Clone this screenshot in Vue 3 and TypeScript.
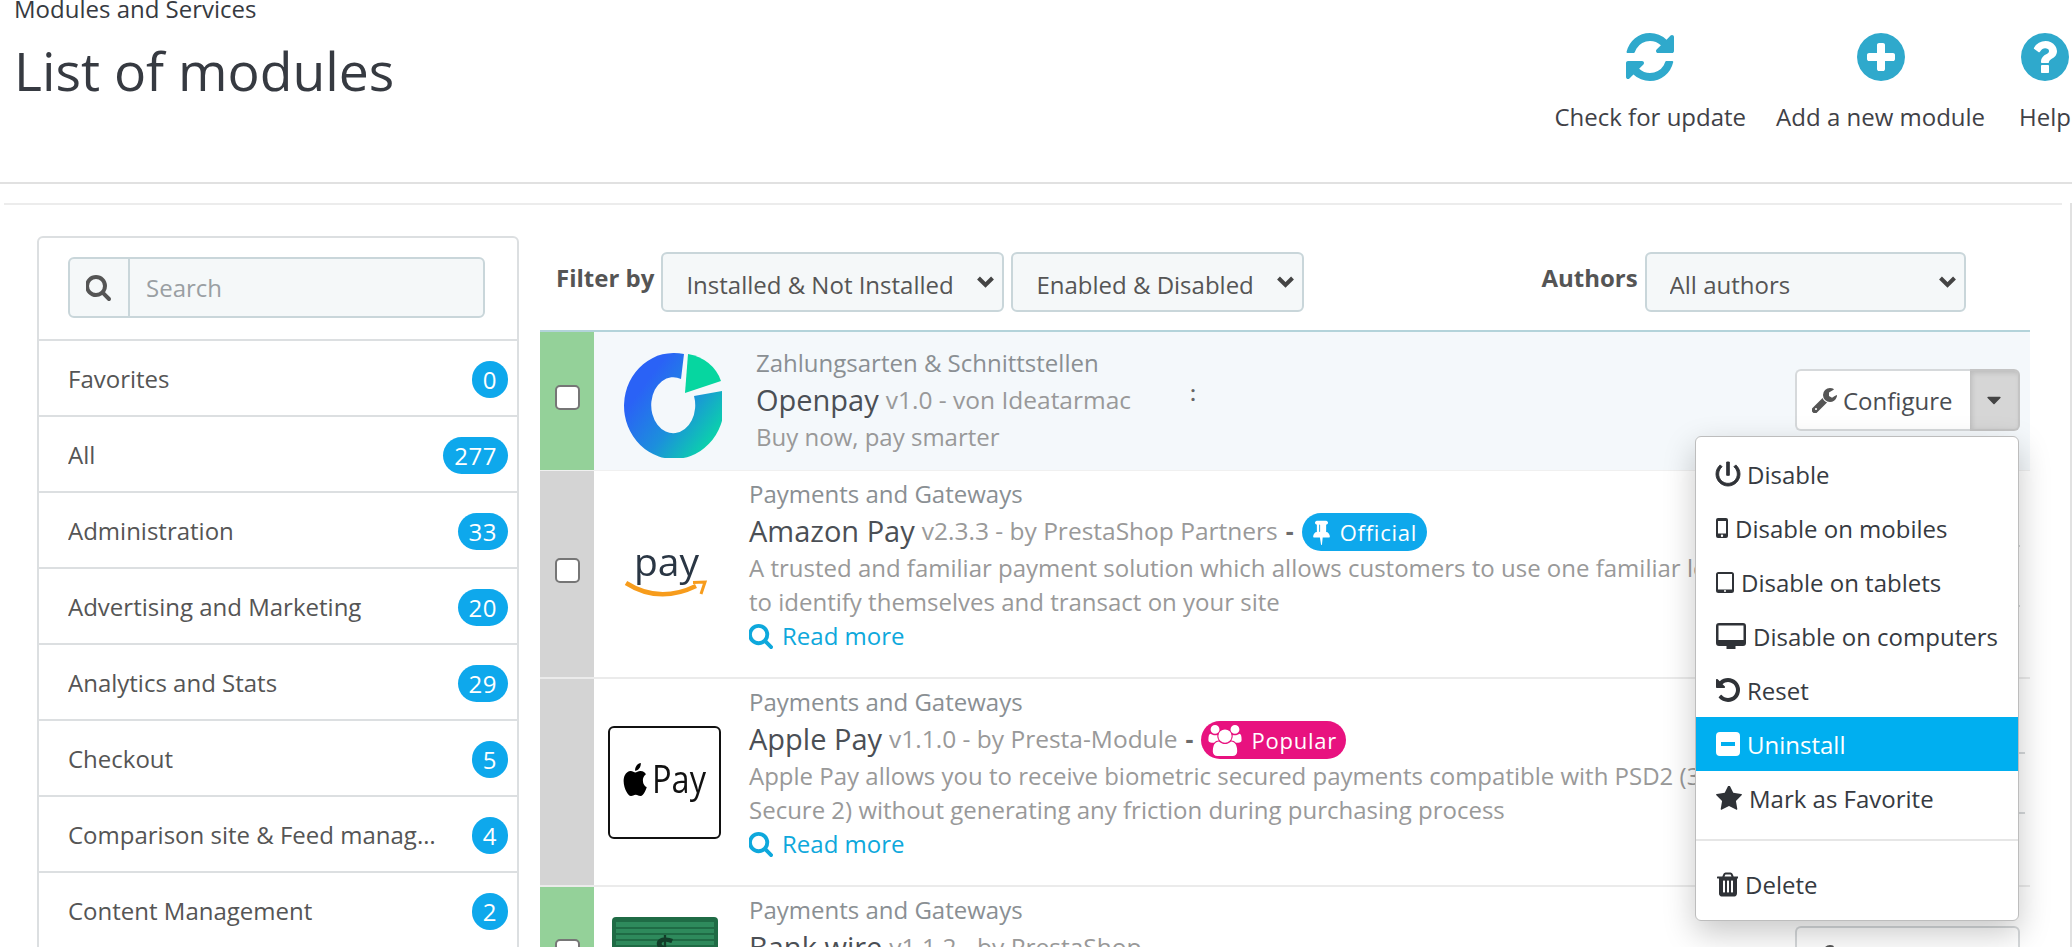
<script setup lang="ts">
interface Category { name: string; count: number }
interface MenuItem { label: string; vb: string; w: number; h: number; d: string; active?: boolean; evenodd?: boolean; sep?: boolean; heavy?: boolean }

const categories: Category[] = [
  { name: 'Favorites', count: 0 },
  { name: 'All', count: 277 },
  { name: 'Administration', count: 33 },
  { name: 'Advertising and Marketing', count: 20 },
  { name: 'Analytics and Stats', count: 29 },
  { name: 'Checkout', count: 5 },
  { name: 'Comparison site & Feed management', count: 4 },
  { name: 'Content Management', count: 2 },
]

const wrench = 'M448 1472q0-26-19-45t-45-19-45 19-19 45 19 45 45 19 45-19 19-45zm644-420l-682 682q-37 37-90 37-52 0-91-37l-106-108q-38-36-38-90 0-53 38-91l681-681q39 98 114.5 173.5t173.5 114.5zm634-435q0 39-23 106-47 134-164.5 217.5t-258.5 83.5q-185 0-316.5-131.5t-131.5-316.5 131.5-316.5 316.5-131.5q58 0 121.5 16.5t107.5 46.5q16 11 16 28t-16 28l-293 169v224l193 107q5-3 79-48.5t135.5-81 70.5-35.5q15 0 23.5 10t8.5 25z'
const caret = 'M1408 704q0 26-19 45l-448 448q-19 19-45 19t-45-19l-448-448q-19-19-19-45t19-45 45-19h896q26 0 45 19t19 45z'
const search = 'M1216 832q0-185-131.5-316.5t-316.5-131.5-316.5 131.5-131.5 316.5 131.5 316.5 316.5 131.5 316.5-131.5 131.5-316.5zm512 832q0 52-38 90t-90 38q-54 0-90-38l-343-342q-179 124-399 124-143 0-273.5-55.5t-225-150-150-225-55.5-273.5 55.5-273.5 150-225 225-150 273.5-55.5 273.5 55.5 225 150 150 225 55.5 273.5q0 220-124 399l343 343q37 37 37 90z'

const menu: MenuItem[] = [
  { label: 'Disable', vb: '3 3 18 18', w: 24, h: 24, heavy: true, d: 'M13 3h-2v10h2V3zm4.83 2.17l-1.42 1.42C17.99 7.86 19 9.81 19 12c0 3.87-3.13 7-7 7s-7-3.13-7-7c0-2.19 1.01-4.14 2.58-5.42L6.17 5.17C4.23 6.82 3 9.26 3 12c0 4.97 4.03 9 9 9s9-4.03 9-9c0-2.74-1.23-5.18-3.17-6.83z' },
  { label: 'Disable on mobiles', vb: '0 0 12 20', w: 12, h: 20, evenodd: true, d: 'M2 0h8a2 2 0 0 1 2 2v16a2 2 0 0 1-2 2H2a2 2 0 0 1-2-2V2a2 2 0 0 1 2-2zm0 3v12.5h8V3zM6 16.5a1.2 1.2 0 1 0 0 2.4 1.2 1.2 0 0 0 0-2.4z' },
  { label: 'Disable on tablets', vb: '0 0 18 21', w: 18, h: 21, evenodd: true, d: 'M2.5 0h13A2.5 2.5 0 0 1 18 2.5v16a2.5 2.5 0 0 1-2.5 2.5h-13A2.5 2.5 0 0 1 0 18.5v-16A2.5 2.5 0 0 1 2.5 0zM2 2v15.5h14V2zM9 18a1 1 0 1 0 0 2 1 1 0 0 0 0-2z' },
  { label: 'Disable on computers', vb: '0 0 30 26', w: 30, h: 26, evenodd: true, d: 'M3 0h24a3 3 0 0 1 3 3v17a3 3 0 0 1-3 3h-7.5v3h-9v-3H3a3 3 0 0 1-3-3V3a3 3 0 0 1 3-3zm-.5 2.5v14.5h25V2.5z' },
  { label: 'Reset', vb: '128 128 1536 1536', w: 24, h: 24, d: 'M1664 896q0 156-61 298t-164 245-245 164-298 61q-172 0-327-72.5t-264-204.5q-7-10-6.5-22.5t8.5-20.5l137-138q10-9 25-9 16 2 23 12 73 95 179 147t225 52q104 0 198.5-40.5t163.5-109.5 109.5-163.5 40.5-198.5-40.5-198.5-109.5-163.5-163.5-109.5-198.5-40.5q-98 0-188 35.5t-160 101.5l137 138q31 30 14 69-17 40-59 40h-448q-26 0-45-19t-19-45v-448q0-42 40-59 39-17 69 14l130 129q107-101 244.5-156.5t284.5-55.5q156 0 298 61t245 164 164 245 61 298z' },
  { label: 'Uninstall', vb: '0 0 24 24', w: 24, h: 24, active: true, evenodd: true, d: 'M4 0h16a4 4 0 0 1 4 4v16a4 4 0 0 1-4 4H4a4 4 0 0 1-4-4V4a4 4 0 0 1 4-4zm1 10v4h14v-4z' },
  { label: 'Mark as Favorite', vb: '0 128 1664 1536', w: 26, h: 25, d: 'M1664 647q0 22-26 48l-363 354 86 500q1 7 1 20 0 21-10.5 35.5t-30.5 14.5q-19 0-40-12l-449-236-449 236q-22 12-40 12-21 0-31.5-14.5t-10.5-35.5q0-6 2-20l86-500-364-354q-25-27-25-48 0-37 56-46l502-73 225-455q19-41 49-41t49 41l225 455 502 73q56 9 56 46z' },
  { label: 'Delete', vb: '128 128 1408 1536', w: 22, h: 25, sep: true, d: 'M704 1376v-704q0-14-9-23t-23-9h-64q-14 0-23 9t-9 23v704q0 14 9 23t23 9h64q14 0 23-9t9-23zm256 0v-704q0-14-9-23t-23-9h-64q-14 0-23 9t-9 23v704q0 14 9 23t23 9h64q14 0 23-9t9-23zm256 0v-704q0-14-9-23t-23-9h-64q-14 0-23 9t-9 23v704q0 14 9 23t23 9h64q14 0 23-9t9-23zm-544-992h448l-48-117q-7-9-17-11h-317q-10 2-17 11zm928 32v64q0 14-9 23t-23 9h-96v948q0 83-47 143.5t-113 60.5h-832q-66 0-113-58.5t-47-141.5v-952h-96q-14 0-23-9t-9-23v-64q0-14 9-23t23-9h309l70-167q15-37 54-63t79-26h320q40 0 79 26t54 63l70 167h309q14 0 23 9t9 23z' },
]
</script>

<template>
  <div class="page">
    <header class="head">
      <div class="titles">
        <div class="crumb">Modules and Services</div>
        <h1 class="title">List of modules</h1>
      </div>
      <nav class="toolbar">
        <a class="tool tool-update">
          <svg width="48" height="48" viewBox="128 128 1536 1536"><path d="M1639 1056q0 5-1 7-64 268-268 434.5t-478 166.5q-146 0-282.5-55t-243.5-157l-129 129q-19 19-45 19t-45-19-19-45v-448q0-26 19-45t45-19h448q26 0 45 19t19 45-19 45l-137 137q71 66 161 102t187 36q134 0 250-65t186-179q11-17 53-117 8-23 30-23h192q13 0 22.5 9.5t9.5 22.5zm25-800v448q0 26-19 45t-45 19h-448q-26 0-45-19t-19-45 19-45l138-138q-148-137-349-137-134 0-250 65t-186 179q-11 17-53 117-8 23-30 23h-199q-13 0-22.5-9.5t-9.5-22.5v-7q65-268 270-434.5t480-166.5q146 0 284 55.5t245 156.5l130-129q19-19 45-19t45 19 19 45z" /></svg>
          <span>Check for update</span>
        </a>
        <a class="tool tool-add">
          <svg width="48" height="48" viewBox="128 128 1536 1536"><path d="M1344 960v-128q0-26-19-45t-45-19h-256v-256q0-26-19-45t-45-19h-128q-26 0-45 19t-19 45v256h-256q-26 0-45 19t-19 45v128q0 26 19 45t45 19h256v256q0 26 19 45t45 19h128q26 0 45-19t19-45v-256h256q26 0 45-19t19-45zm320-64q0 209-103 385.5t-279.5 279.5-385.5 103-385.5-103-279.5-279.5-103-385.5 103-385.5 279.5-279.5 385.5-103 385.5 103 279.5 279.5 103 385.5z" /></svg>
          <span>Add a new module</span>
        </a>
        <a class="tool tool-help">
          <svg width="48" height="48" viewBox="128 128 1536 1536"><path d="M1024 1376v-192q0-14-9-23t-23-9h-192q-14 0-23 9t-9 23v192q0 14 9 23t23 9h192q14 0 23-9t9-23zm256-672q0-88-55.5-163t-138.5-116-170-41q-243 0-371 213-15 24 8 42l132 100q7 6 19 6 16 0 25-12 53-68 86-92 34-24 86-24 48 0 85.5 26t37.5 59q0 38-20 61t-68 45q-63 28-115.5 86.5t-52.5 125.5v36q0 14 9 23t23 9h192q14 0 23-9t9-23q0-19 21.5-49.5t54.5-49.5q32-18 49-28.5t46-35 44.5-48 28-60.5 12.5-81zm384 192q0 209-103 385.5t-279.5 279.5-385.5 103-385.5-103-279.5-279.5-103-385.5 103-385.5 279.5-279.5 385.5-103 385.5 103 279.5 279.5 103 385.5z" /></svg>
          <span>Help</span>
        </a>
      </nav>
    </header>

    <div class="content">
      <div class="rule" />
      <div class="layout">
        <aside class="side">
          <div class="side-search">
            <div class="search-group">
              <span class="search-addon">
                <svg width="26" height="26" viewBox="128 128 1664 1664"><path :d="search" /></svg>
              </span>
              <input class="search-input" placeholder="Search" />
            </div>
          </div>
          <div v-for="c in categories" :key="c.name" class="cat">
            <span class="cat-name">{{ c.name }}</span>
            <span class="cat-count">{{ c.count }}</span>
          </div>
        </aside>

        <main class="main">
          <div class="filters">
            <label class="filter-label">Filter by</label>
            <select class="sel sel-install"><option>Installed &amp; Not Installed</option></select>
            <select class="sel sel-enable"><option>Enabled &amp; Disabled</option></select>
            <label class="filter-label authors">Authors</label>
            <select class="sel sel-author"><option>All authors</option></select>
          </div>

          <div class="table">
            <!-- Openpay -->
            <div class="row row-open">
              <div class="status on"><input type="checkbox" class="check" /></div>
              <div class="logo logo-open">
                <svg class="open-mark" width="100" height="106" viewBox="0 0 100 106">
                  <defs>
                    <linearGradient id="openGrad" x1="0.2" y1="0.3" x2="0.9" y2="0.85">
                      <stop offset="0" stop-color="#2a62f6" />
                      <stop offset="0.5" stop-color="#1c8fdc" />
                      <stop offset="1" stop-color="#0ad6a8" />
                    </linearGradient>
                  </defs>
                  <path d="M62 2A50 53 0 1 0 100 39L72 44A22 28 0 1 1 59 27Z" fill="url(#openGrad)" />
                  <path d="M66 2A42 40 0 0 1 99 29L63 41Z" fill="#06d6a0" />
                </svg>
              </div>
              <div class="info info-open">
                <div class="cat-line">Zahlungsarten &amp; Schnittstellen</div>
                <div class="name-line"><span class="name">Openpay</span> <span class="ver">v1.0 - von Ideatarmac</span></div>
                <div class="desc">Buy now, pay smarter</div>
              </div>
              <span class="note">:</span>
              <div class="actions act-open">
                <div class="btn-group">
                  <button class="btn-main">
                    <svg width="25" height="25" viewBox="128 128 1600 1600"><path :d="wrench" /></svg>
                    Configure
                  </button>
                  <button class="btn-caret open">
                    <svg width="20" height="20" viewBox="128 128 1536 1536"><path :d="caret" /></svg>
                  </button>
                </div>
                <ul class="menu">
                  <template v-for="m in menu" :key="m.label">
                    <li v-if="m.sep" class="menu-sep" />
                    <li class="menu-item" :class="{ active: m.active, heavy: m.heavy }">
                      <svg :width="m.w" :height="m.h" :viewBox="m.vb"><path :d="m.d" :fill-rule="m.evenodd ? 'evenodd' : undefined" /></svg>
                      <span>{{ m.label }}</span>
                    </li>
                  </template>
                </ul>
              </div>
            </div>

            <!-- Amazon Pay -->
            <div class="row">
              <div class="status off"><input type="checkbox" class="check" /></div>
              <div class="logo">
                <svg class="soft" width="120" height="60" viewBox="0 0 120 60">
                  <text x="29" y="32" class="pay-word">pay</text>
                  <path d="M21 39Q54 60 91 42" fill="none" stroke="#f79c1c" stroke-width="4.500" />
                  <path d="M88 38.500L100 38L96 50" fill="none" stroke="#f79c1c" stroke-width="3" />
                </svg>
              </div>
              <div class="info">
                <div class="cat-line">Payments and Gateways</div>
                <div class="name-line">
                  <span class="name">Amazon Pay</span> <span class="ver">v2.3.3 - by PrestaShop Partners</span>
                  <span class="dash">-</span>
                  <span class="flag flag-official">
                    <svg width="17" height="26" viewBox="0 0 1152 1792"><path d="M480 864v-448q0-14-9-23t-23-9-23 9-9 23v448q0 14 9 23t23 9 23-9 9-23zm672 352q0 26-19 45t-45 19h-429l-51 483q-2 12-10.500 20.500t-20.500 8.500h-1q-27 0-32-27l-76-485h-404q-26 0-45-19t-19-45q0-123 78.500-221.500t177.500-98.500v-512q-52 0-90-38t-38-90 38-90 90-38h640q52 0 90 38t38 90-38 90-90 38v512q99 0 177.500 98.500t78.500 221.500z" /></svg>
                    Official
                  </span>
                </div>
                <div class="desc wrap">A trusted and familiar payment solution which allows customers to use one familiar login to identify themselves and transact on your site</div>
                <a class="more"><svg width="25" height="25" viewBox="128 128 1664 1664"><path :d="search" /></svg> Read more</a>
              </div>
              <div class="actions act-mid">
                <div class="btn-group">
                  <button class="btn-main">Install</button>
                </div>
              </div>
            </div>

            <!-- Apple Pay -->
            <div class="row">
              <div class="status off" />
              <div class="logo">
                <div class="apple-box">
                  <svg class="soft" width="109" height="109" viewBox="0 0 109 109">
                    <g transform="translate(11 35) scale(1.18 1.38)"><path d="M12.152 6.896c-.948 0-2.415-1.078-3.96-1.04-2.04.027-3.91 1.183-4.961 3.014-2.117 3.675-.546 9.103 1.519 12.09 1.013 1.454 2.208 3.09 3.792 3.039 1.52-.065 2.09-.987 3.935-.987 1.831 0 2.35.987 3.96.948 1.637-.026 2.676-1.48 3.676-2.948 1.156-1.688 1.636-3.325 1.662-3.415-.039-.013-3.182-1.221-3.22-4.857-.026-3.04 2.48-4.494 2.597-4.559-1.429-2.09-3.623-2.324-4.39-2.376-2-.156-3.675 1.09-4.61 1.09zM15.530 3.830c.843-1.012 1.4-2.427 1.245-3.830-1.207.052-2.662.805-3.532 1.818-.78.896-1.454 2.338-1.273 3.714 1.338.104 2.715-.688 3.559-1.701" /></g>
                    <text x="42" y="65" class="apple-word" textLength="54" lengthAdjust="spacingAndGlyphs">Pay</text>
                  </svg>
                </div>
              </div>
              <div class="info">
                <div class="cat-line">Payments and Gateways</div>
                <div class="name-line">
                  <span class="name">Apple Pay</span> <span class="ver">v1.1.0 - by Presta-Module</span>
                  <span class="dash">-</span>
                  <span class="flag flag-popular">
                    <svg width="34" height="31" viewBox="0 0 1920 1792"><path d="M593 896q-162 5-265 128h-134q-82 0-138-40.500t-56-118.500q0-353 124-353 6 0 43.500 21t97.500 42.500 119 21.500q67 0 133-23-5 37-5 66 0 139 81 256zm1071 637q0 120-73 189.500t-194 69.500h-874q-121 0-194-69.500t-73-189.500q0-53 3.500-103.500t14-109 26.500-108.500 43-97.500 62-81 85.500-53.500 111.500-20q10 0 43 21.500t73 48 107 48 135 21.500 135-21.500 107-48 73-48 43-21.500q61 0 111.500 20t85.500 53.500 62 81 43 97.500 26.500 108.500 14 109 3.500 103.500zm-1024-1277q0 106-75 181t-181 75-181-75-75-181 75-181 181-75 181 75 75 181zm704 384q0 159-112.500 271.500t-271.500 112.500-271.500-112.500-112.500-271.500 112.500-271.500 271.500-112.500 271.500 112.500 112.500 271.500zm576 225q0 78-56 118.500t-138 40.500h-134q-103-123-265-128 81-117 81-256 0-29-5-66 66 23 133 23 59 0 119-21.500t97.500-42.500 43.500-21q124 0 124 353zm-128-609q0 106-75 181t-181 75-181-75-75-181 75-181 181-75 181 75 75 181z" /></svg>
                    Popular
                  </span>
                </div>
                <div class="desc wrap">Apple Pay allows you to receive biometric secured payments compatible with PSD2 (3D Secure 2) without generating any friction during purchasing process</div>
                <a class="more"><svg width="25" height="25" viewBox="128 128 1664 1664"><path :d="search" /></svg> Read more</a>
              </div>
              <div class="actions act-apple">
                <div class="btn-group">
                  <button class="btn-main">Install</button>
                </div>
              </div>
            </div>

            <!-- Bank wire -->
            <div class="row row-bank">
              <div class="status on"><input type="checkbox" class="check" /></div>
              <div class="logo">
                <svg width="120" height="76" viewBox="0 0 120 76" class="bank-mark">
                  <rect x="7" y="0" width="106" height="76" rx="4" fill="#1f6b45" />
                  <rect x="11" y="5" width="98" height="66" fill="#2e8a5c" />
                  <path d="M11 11h98M11 17h98M11 23h98M11 29h98" stroke="#1f6b45" stroke-width="2" />
                  <text x="60" y="44" class="bank-word">$</text>
                </svg>
              </div>
              <div class="info">
                <div class="cat-line">Payments and Gateways</div>
                <div class="name-line"><span class="name">Bank wire</span> <span class="ver">v1.1.2 - by PrestaShop</span></div>
                <div class="desc">Accept payments by bank transfer</div>
              </div>
              <div class="actions act-bank">
                <div class="btn-group">
                  <button class="btn-main">
                    <svg width="25" height="25" viewBox="128 128 1600 1600"><path :d="wrench" /></svg>
                    Configure
                  </button>
                  <button class="btn-caret">
                    <svg width="20" height="20" viewBox="128 128 1536 1536"><path :d="caret" /></svg>
                  </button>
                </div>
              </div>
            </div>
          </div>
        </main>
      </div>
    </div>
  </div>
</template>

<style scoped>
.page {
  width: 2072px;
  height: 947px;
  overflow: hidden;
  background: #fff;
  font-family: "Open Sans", "Noto Sans", sans-serif;
  color: #363a41;
}

/* header */
.head {
  height: 182px;
  border-bottom: 2px solid #e1e1e1;
  display: flex;
  justify-content: space-between;
  padding-left: 14px;
  padding-right: 1px;
}
.crumb {
  font-size: 24px;
  line-height: 24px;
  margin-top: -3px;
}
.title {
  margin: 15px 0 0;
  font-size: 53.500px;
  line-height: 70px;
  font-weight: 400;
  color: #363a41;
}
.toolbar {
  display: flex;
  padding-top: 33px;
}
.tool {
  display: flex;
  flex-direction: column;
  align-items: center;
  font-size: 24px;
  line-height: 32px;
  color: #3f4147;
}
.tool svg { fill: #2fa9cc; margin-bottom: 20px; }
.tool-add { margin-left: 30px; }
.tool-help { margin-left: 34px; }

/* page frame */
.content {
  border-right: 2px solid #e1e1e1;
  height: 763px;
}
.rule {
  height: 2px;
  background: #ececec;
  margin: 19px 8px 0 4px;
}
.layout {
  display: flex;
  padding: 31px 0 0 37px;
}

/* sidebar */
.side {
  width: 482px;
  flex: none;
  border: 2px solid #dcdfe1;
  border-radius: 6px;
  box-sizing: border-box;
  height: 800px;
}
.side-search {
  padding: 19px 32px 21px 29px;
}
.search-group {
  display: flex;
  height: 61px;
  box-sizing: border-box;
  border: 2px solid #c9d6da;
  border-radius: 6px;
  background: #f5f8f9;
}
.search-addon {
  width: 58px;
  flex: none;
  border-right: 2px solid #c9d6da;
  display: flex;
  align-items: center;
  justify-content: center;
}
.search-addon svg { fill: #555; }
.search-input {
  flex: 1;
  min-width: 0;
  border: 0;
  background: transparent;
  outline: none;
  padding: 0 0 0 16px;
  font: 24px "Open Sans", sans-serif;
}
.search-input::placeholder { color: #9a9fa3; opacity: 1; }
.cat {
  height: 74px;
  border-top: 2px solid #dcdfe1;
  display: flex;
  align-items: center;
  padding: 0 9px 0 29px;
  font-size: 24px;
  color: #555;
}
.cat-name {
  flex: 1;
  min-width: 0;
  white-space: nowrap;
  overflow: hidden;
  text-overflow: ellipsis;
  margin-right: 36px;
}
.cat-count {
  flex: none;
  height: 37px;
  line-height: 38px;
  padding: 0 11px;
  min-width: 14px;
  text-align: center;
  border-radius: 19px;
  background: #0ea8ec;
  color: #fff;
  font-size: 24px;
  letter-spacing: .5px;
  margin-top: 2px;
}

/* filters */
.main {
  width: 1490px;
  margin-left: 21px;
  flex: none;
}
.filters {
  display: flex;
  height: 60px;
  margin-top: 16px;
  margin-bottom: 18px;
  padding-left: 16px;
}
.filter-label {
  font-size: 24px;
  font-weight: 700;
  color: #555;
  line-height: 52px;
  margin-right: 7px;
}
.authors {
  margin-left: 237px;
}
.sel {
  appearance: none;
  height: 60px;
  box-sizing: border-box;
  border: 2px solid #c9d6da;
  border-radius: 6px;
  background-color: #f5f8f9;
  background-image: url("data:image/svg+xml,%3Csvg xmlns='http://www.w3.org/2000/svg' width='19' height='14'%3E%3Cpath d='M2.500 3l7 7 7-7' fill='none' stroke='%23444' stroke-width='4'/%3E%3C/svg%3E");
  background-repeat: no-repeat;
  background-position: right 7px top 21px;
  padding: 4px 0 0 23px;
  font: 24px "Open Sans", sans-serif;
  color: #555;
}
.sel-install { width: 343px; margin-right: 7px; }
.sel-enable { width: 293px; }
.sel-author { width: 321px; }

/* rows */
.table {
  border-top: 2px solid #b3d3da;
}
.row {
  display: flex;
  min-height: 206px;
  border-bottom: 2px solid #ebebeb;
}
.row-open {
  min-height: 138px;
  background: #f4f8fb;
  border-bottom: 1px solid #f0f0f0;
}
.row-bank { min-height: 136px; }
.status {
  width: 54px;
  flex: none;
  display: flex;
  align-items: center;
  justify-content: center;
  box-sizing: border-box;
}
.status.on { background: #94d199; }
.status.off { background: #d4d4d4; }
.check {
  appearance: none;
  width: 25px;
  height: 25px;
  margin: 0 0 8px;
  background: #fff;
  border: 2px solid #767676;
  border-radius: 5px;
  box-sizing: border-box;
}
.logo {
  width: 155px;
  flex: none;
  display: flex;
  align-items: center;
  padding-left: 11px;
  box-sizing: border-box;
}
.logo-open {
  width: 162px;
  padding-left: 28px;
  padding-top: 8px;
}
.open-mark { filter: blur(.6px); }
.bank-mark { filter: blur(.5px); }
.soft { filter: blur(.3px); }
.pay-word {
  font: 500 39px "Open Sans", sans-serif;
  fill: #2a3644;
}
.apple-box {
  width: 113px;
  height: 113px;
  margin-left: 3px;
  box-sizing: border-box;
  border: 2px solid #111;
  border-radius: 6px;
  background: #fff;
}
.apple-word {
  font: 38px "Open Sans", sans-serif;
  fill: #111;
}
.bank-word {
  font: 700 34px "Open Sans", sans-serif;
  fill: #123d29;
  text-anchor: middle;
}

.info {
  flex: 1;
  min-width: 0;
  padding-top: 6px;
}
.info-open {
  flex: none;
  width: 434px;
  padding-top: 14px;
}
.cat-line {
  font-size: 24px;
  line-height: 34px;
  color: #8a8f93;
  white-space: nowrap;
}
.name-line {
  height: 40px;
  line-height: 40px;
  white-space: nowrap;
  color: #999;
  font-size: 24.500px;
  display: flex;
  align-items: center;
  gap: 7px;
}
.name { font-size: 29px; color: #4b4f55; }
.ver { color: #999; }
.dash { font-weight: 700; color: #6c6c6c; margin: 0 1px; }
.flag {
  display: inline-flex;
  align-items: center;
  gap: 10px;
  height: 38px;
  border-radius: 19px;
  padding: 0 10px 0 11px;
  color: #fff;
  font-size: 22px;
  letter-spacing: .75px;
  margin-top: 2px;
}
.flag svg { fill: #fff; flex: none; }
.flag-official { background: #0ea8ec; }
.flag-popular { background: #e8127f; padding: 0 9px 0 7px; gap: 9px; }
.desc {
  font-size: 24px;
  line-height: 34px;
  color: #999;
}
.wrap { width: 1015px; }
.more {
  display: flex;
  align-items: center;
  gap: 8px;
  font-size: 24px;
  line-height: 34px;
  color: #0ea8dc;
}
.more svg { fill: #0ea8dc; }
.note {
  font-size: 22px;
  line-height: 20px;
  font-weight: 600;
  color: #666;
  margin-top: 50px;
}

/* action buttons */
.actions {
  position: relative;
  margin-left: auto;
  flex: none;
  align-self: flex-start;
}
.act-open { margin-top: 37px; margin-right: 10px; }
.act-mid { margin-top: 74px; margin-right: 10px; }
.act-apple { margin-top: 73px; margin-right: 5px; }
.act-bank { margin-top: 39px; margin-right: 10px; }
.btn-group {
  display: flex;
  height: 62px;
}
.btn-main {
  display: flex;
  align-items: center;
  gap: 6px;
  width: 175px;
  box-sizing: border-box;
  padding: 0 0 0 15px;
  background: #fff;
  border: 2px solid #d6d9db;
  border-right: 0;
  border-radius: 6px 0 0 6px;
  font: 24px "Open Sans", sans-serif;
  color: #4a4d52;
}
.btn-main svg { fill: #555; flex: none; }
.btn-caret {
  width: 50px;
  padding: 0;
  display: flex;
  align-items: center;
  justify-content: center;
  background: #fff;
  border: 2px solid #d6d9db;
  border-left: 0;
  border-radius: 0 6px 6px 0;
}
.btn-caret svg { fill: #444; }
.btn-caret.open {
  background: #d6d6d6;
  border-color: #c4c4c4;
  box-shadow: inset 2px 2px 5px rgba(0, 0, 0, .12);
}
.menu {
  position: absolute;
  top: 67px;
  right: 1px;
  z-index: 10;
  width: 324px;
  box-sizing: border-box;
  margin: 0;
  padding: 10px 0 9px;
  list-style: none;
  background: #fff;
  border: 1px solid #bdbdbd;
  border-radius: 6px;
  box-shadow: 0 12px 32px rgba(0, 0, 0, .22);
}
.menu-item {
  display: flex;
  align-items: center;
  gap: 7px;
  height: 54px;
  padding-left: 20px;
  font-size: 24px;
  color: #363a41;
}
.menu-item svg { fill: #2f3237; flex: none; }
.menu-item.heavy svg { stroke: #2f3237; stroke-width: .7px; overflow: visible; }
.menu-item.active { background: #00aff0; color: #fff; }
.menu-item.active svg { fill: #fff; }
.menu-sep {
  height: 2px;
  background: #e6e6e6;
  margin: 14px 0 16px;
}
</style>
